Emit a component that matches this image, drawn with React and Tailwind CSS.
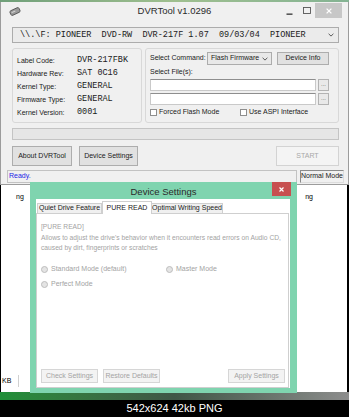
const mono = "font-['Liberation_Mono','Courier_New',monospace]";

function DriveIcon() {
  return (
    <svg width="12" height="9" viewBox="0 0 12 9">
      <g transform="rotate(-25 6 4.5)">
        <rect x="1" y="2" width="10" height="5" rx="1.5" fill="#9a9a9a" stroke="#4d4d4d" strokeWidth="0.8" />
        <rect x="2.5" y="3.6" width="4" height="1" fill="#d6d6d6" />
      </g>
    </svg>
  );
}

function Chevron() {
  return (
    <svg width="6" height="4" viewBox="0 0 6 4">
      <path d="M0.6 0.8 L3 3.1 L5.4 0.8" fill="none" stroke="#4a4a4a" strokeWidth="0.9" />
    </svg>
  );
}

function XGlyph({ size = 6, color = '#fff', w = 1.2 }) {
  return (
    <svg width={size} height={size} viewBox="0 0 6 6">
      <path d="M0.6 0.6 L5.4 5.4 M5.4 0.6 L0.6 5.4" stroke={color} strokeWidth={w} />
    </svg>
  );
}

function Radio({ label, className = '' }) {
  return (
    <div className={`flex items-center gap-[3px] h-[10px] ${className}`}>
      <span className="w-[7px] h-[7px] rounded-full bg-[#e4e4e4] border border-[#bdbdbd]" />
      <span>{label}</span>
    </div>
  );
}

function Checkbox({ label, className = '' }) {
  return (
    <div className={`flex items-center gap-[2px] ${className}`}>
      <span className="w-[7px] h-[7px] bg-white border border-[#8e8e8e]" />
      <span>{label}</span>
    </div>
  );
}

function FileRow() {
  return (
    <div className="mt-[2px] flex gap-[2px]">
      <div className="w-[166px] h-[12px] bg-white border border-[#c9c9c9] border-t-[#8e8e8e]" />
      <div className="w-[11px] h-[12px] bg-[#e9e9e9] border border-[#b3b3b3] text-[6px] leading-[9px] text-center text-[#555]">...</div>
    </div>
  );
}

const info = [
  ['Label Code:', 'DVR-217FBK'],
  ['Hardware Rev:', 'SAT 0C16'],
  ['Kernel Type:', 'GENERAL'],
  ['Firmware Type:', 'GENERAL'],
  ['Kernel Version:', '0001'],
];

export default function App() {
  return (
    <div className="relative w-[349px] h-[417px] overflow-hidden bg-white font-['Liberation_Sans',Arial,sans-serif] text-[#1a1a1a]">
      <div className="h-[2px] bg-gradient-to-r from-[#6f9f79] via-[#9fbf8f] to-[#84b393]" />

      {/* DVRTool main window */}
      <div className="h-[183px] bg-[#f0f0f0] border-x border-b border-[#9c9c9c] flex flex-col">
        <div className="h-[18px] grid grid-cols-[67px_1fr_67px] items-center">
          <div className="pl-[8px] flex items-center"><DriveIcon /></div>
          <div className="text-center text-[9.5px] leading-none text-[#2b2b2b]">DVRTool v1.0296</div>
          <div className="flex items-center h-full">
            <svg width="7" height="7" viewBox="0 0 7 7" className="ml-[5px] mt-[2px]">
              <rect x="0.5" y="4.5" width="6" height="1.3" fill="#333" />
            </svg>
            <svg width="8" height="7" viewBox="0 0 8 7" className="ml-[10px] -mt-[1px]">
              <rect x="0.5" y="0.5" width="7" height="6" fill="none" stroke="#555" strokeWidth="0.9" />
            </svg>
            <div className="ml-[4px] self-start mt-[1px] w-[27px] h-[15px] bg-[#c7c7c7] flex items-center justify-center">
              <XGlyph size={6} w={1.3} />
            </div>
          </div>
        </div>

        <div className="flex-1 flex flex-col pl-[11px] pr-[9px] pt-[7px] text-[7px]">
          <div className={`h-[16px] bg-[#ebebeb] border border-[#acacac] flex items-center justify-between pl-[7px] pr-[4px] ${mono} text-[8.5px] whitespace-pre`}>
            <span>{'\\\\.\\F: PIONEER  DVD-RW  DVR-217F 1.07  09/03/04  PIONEER'}</span>
            <Chevron />
          </div>

          <div className="mt-[5px] flex gap-[3px]">
            <div className="w-[130px] h-[75px] border border-[#d8d8d8] rounded-[3px] pt-[5px] pl-[4px] leading-[13px]">
              {info.map(([l, v]) => (
                <div key={l} className="flex items-center h-[13px]">
                  <span className="w-[60px]">{l}</span>
                  <span className={`${mono} text-[8.5px]`}>{v}</span>
                </div>
              ))}
            </div>
            <div className="flex-1 h-[75px] border border-[#d8d8d8] rounded-[3px] pt-[3px] px-[4px]">
              <div className="flex items-center h-[13px]">
                <span className="w-[57px]">Select Command:</span>
                <div className="w-[65px] h-[13px] border border-[#acacac] bg-[#e8e8e8] flex items-center justify-between px-[3px]">
                  <span>Flash Firmware</span>
                  <Chevron />
                </div>
                <div className="ml-[5px] w-[52px] h-[13px] border border-[#adadad] bg-[#e1e1e1] flex items-center justify-center">Device Info</div>
              </div>
              <div className="mt-[2px] h-[10px] leading-[10px]">Select File(s):</div>
              <FileRow />
              <FileRow />
              <div className="mt-[2px] h-[10px] flex items-center">
                <Checkbox label="Forced Flash Mode" className="w-[90px]" />
                <Checkbox label="Use ASPI Interface" />
              </div>
            </div>
          </div>

          <div className="mt-[5px] h-[12px] bg-[#e6e6e6] border border-[#c4c4c4]" />

          <div className="mt-[6px] flex h-[20px]">
            <div className="w-[60px] border border-[#adadad] bg-[#e1e1e1] flex items-center justify-center">About DVRTool</div>
            <div className="ml-[7px] w-[59px] border border-[#adadad] bg-[#e1e1e1] flex items-center justify-center">Device Settings</div>
            <div className="ml-auto w-[63px] border border-[#d3d3d3] bg-[#f4f4f4] flex items-center justify-center text-[#a8a8a8]">START</div>
          </div>

          <div className="mt-[4px] -ml-[5px] -mr-[5px] h-[13px] flex gap-[3px]">
            <div className="flex-1 border border-[#c2c2c2] bg-[#f0f0f0] pl-[1px] flex items-center text-[#2323e6]">Ready.</div>
            <div className="w-[44px] border border-[#8a8a8a] border-r-[#dcdcdc] border-b-[#dcdcdc] flex items-center justify-center">Normal Mode</div>
          </div>
        </div>
      </div>

      {/* page behind the dialog */}
      <div className="h-[207px] border-l border-r-2 border-black flex flex-col justify-between text-[7px] text-black">
        <div className="flex items-start">
          <span className="ml-[15px] mt-[7px]">ng</span>
          <span className="ml-auto mr-[34px] mt-[7px]">ng</span>
        </div>
        <div className="flex items-center mb-[5px]">
          <span className="ml-[1px]">KB</span>
          <span className="ml-[7px] w-px h-[12px] bg-[#d0d0d0]" />
        </div>
      </div>
      <div className="h-[8px] bg-gradient-to-r from-[#1f8f38] via-[#3f5646] to-[#8d8d8d]" />
      <div className="h-[17px] bg-black text-white text-[11px] flex items-center justify-center">542x624 42kb PNG</div>

      {/* Device Settings dialog */}
      <div className="absolute left-[30px] top-[182px] w-[267px] h-[211px] bg-[#7fd4af] flex flex-col">
        <div className="h-[17px] grid grid-cols-[1fr_auto_1fr] items-center">
          <div />
          <div className="text-[9.5px] leading-none text-[#2b2b2b] pt-[3px]">Device Settings</div>
          <div className="flex justify-end self-start pr-[6px]">
            <div className="w-[19px] h-[14px] bg-[#c75050] flex items-center justify-center">
              <XGlyph size={5} w={1.4} />
            </div>
          </div>
        </div>
        <div className="flex-1 ml-[6px] mr-[7px] mb-[5px] bg-white flex flex-col text-[7px]">
          <div className="pt-[2px] pl-[1px] flex items-end h-[14px]">
            <div className="w-[65px] h-[10px] border border-b-0 border-[#cfcfcf] bg-[#f0f0f0] flex items-center justify-center">Quiet Drive Feature</div>
            <div className="w-[50px] h-[13px] -mb-px relative border border-b-0 border-[#cfcfcf] bg-white flex items-center justify-center">PURE READ</div>
            <div className="w-[71px] h-[10px] border border-b-0 border-l-0 border-[#cfcfcf] bg-[#f0f0f0] flex items-center justify-center">Optimal Writing Speed</div>
          </div>
          <div className="flex-1 mr-[1px] border border-[#cfcfcf] pt-[8px] pl-[4px] pb-[4px] flex flex-col text-[#a3a3a3]">
            <div className="text-[6.7px] leading-[10.5px] whitespace-nowrap">
              <div>[PURE READ]</div>
              <div>Allows to adjust the drive's behavior when it encounters read errors on Audio CD,</div>
              <div>caused by dirt, fingerprints or scratches</div>
            </div>
            <div className="mt-[11px] flex">
              <Radio label="Standard Mode (default)" className="w-[125px]" />
              <Radio label="Master Mode" />
            </div>
            <Radio label="Perfect Mode" className="mt-[5px]" />
            <div className="mt-auto flex h-[14px]">
              <div className="w-[57px] border border-[#d6d6d6] bg-[#f3f3f3] flex items-center justify-center">Check Settings</div>
              <div className="ml-[5px] w-[57px] border border-[#d6d6d6] bg-[#f3f3f3] flex items-center justify-center">Restore Defaults</div>
              <div className="ml-auto mr-[3px] w-[57px] border border-[#d6d6d6] bg-[#f3f3f3] flex items-center justify-center">Apply Settings</div>
            </div>
          </div>
        </div>
      </div>
    </div>
  );
}
